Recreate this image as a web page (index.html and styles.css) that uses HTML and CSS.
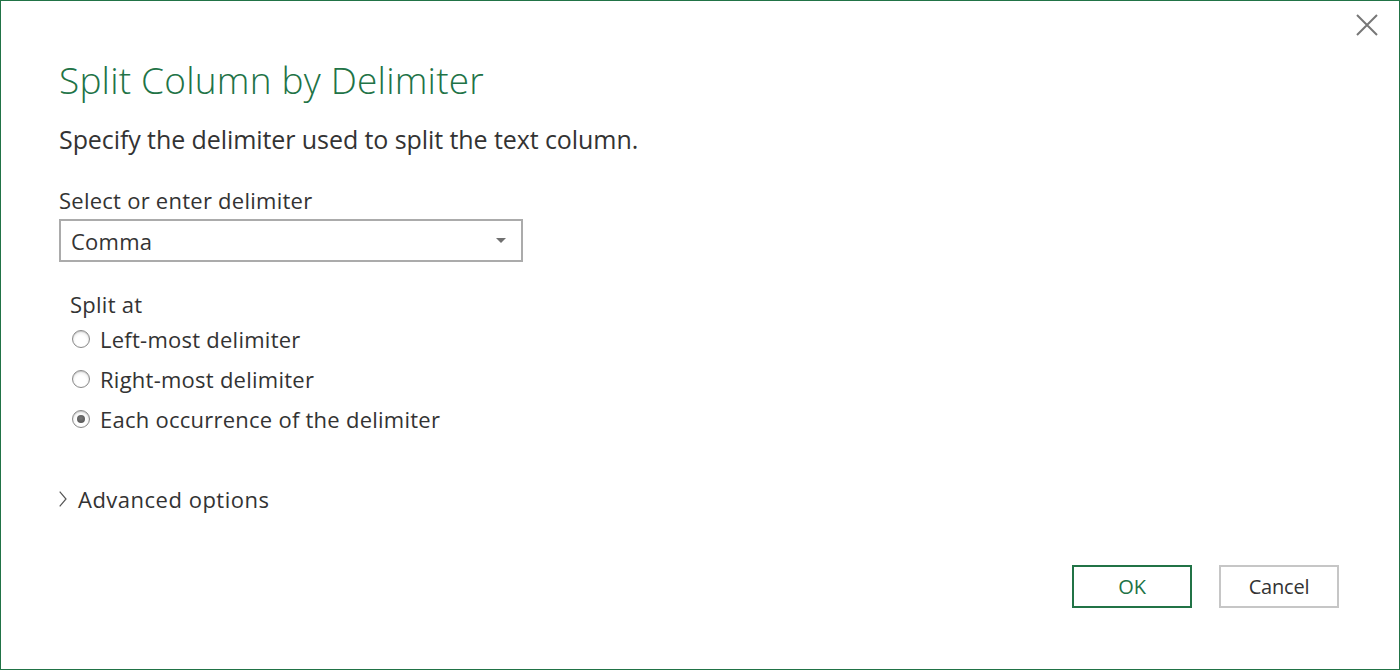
FILE: index.html
```html
<!DOCTYPE html>
<html lang="en">
<head>
<meta charset="utf-8">
<title>Split Column by Delimiter</title>
<link rel="stylesheet" href="styles.css">
</head>
<body>
<div class="dialog">
  <div class="topbar">
    <button class="close" aria-label="Close">
      <svg width="22" height="22" viewBox="0 0 22 22"><path d="M1 1L21 21M21 1L1 21" stroke="#777" stroke-width="2" fill="none"/></svg>
    </button>
  </div>
  <div class="content">
    <h1 class="title">Split Column by Delimiter</h1>
    <p class="subtitle">Specify the delimiter used to split the text column.</p>
    <div class="label">Select or enter delimiter</div>
    <div class="select">
      <span class="select-value">Comma</span>
      <span class="arrow"></span>
    </div>
    <div class="splitat">
      <div class="group-label">Split at</div>
      <div class="radio"><span class="dot"></span><span>Left-most delimiter</span></div>
      <div class="radio"><span class="dot"></span><span>Right-most delimiter</span></div>
      <div class="radio"><span class="dot checked"></span><span>Each occurrence of the delimiter</span></div>
    </div>
    <div class="advanced">
      <svg class="chev" width="8" height="16" viewBox="0 0 8 16"><path d="M0.7 0.7L7 8L0.7 15.3" stroke="#555" stroke-width="1.2" fill="none"/></svg>
      <span>Advanced options</span>
    </div>
  </div>
  <div class="footer">
    <button class="btn ok">OK</button>
    <button class="btn cancel">Cancel</button>
  </div>
</div>
</body>
</html>
```
FILE: styles.css
```css
html, body {
  margin: 0;
  padding: 0;
  background: #fff;
}
body {
  font-family: "Open Sans", "Noto Sans", sans-serif;
  color: #333;
}
.dialog {
  width: 1400px;
  height: 670px;
  box-sizing: border-box;
  border: 1px solid #217346;
  display: flex;
  flex-direction: column;
}
.topbar {
  display: flex;
  justify-content: flex-end;
  padding: 13px 21px 0 0;
  height: 22px;
}
.close {
  width: 22px;
  height: 22px;
  padding: 0;
  border: 0;
  background: none;
  display: block;
}
.close svg { display: block; }
.content {
  padding-left: 58px;
  flex: 1;
  display: flex;
  flex-direction: column;
  align-items: flex-start;
}
.title {
  margin: 20px 0 0 0;
  font-size: 37px;
  font-weight: 300;
  line-height: 48px;
  color: #217346;
  letter-spacing: 0.2px;
}
.subtitle {
  margin: 20px 0 0 0;
  font-size: 25px;
  line-height: 30px;
  letter-spacing: -0.08px;
}
.label {
  margin-top: 32px;
  font-size: 22px;
  line-height: 28px;
  letter-spacing: 0.25px;
}
.select {
  margin-top: 5px;
  box-sizing: border-box;
  width: 464px;
  height: 43px;
  border: 2px solid #ababab;
  display: flex;
  align-items: center;
  justify-content: space-between;
  padding: 0 15px 0 10px;
}
.select-value {
  font-size: 22px;
  letter-spacing: 0.25px;
}
.arrow {
  width: 0;
  height: 0;
  border-left: 5px solid transparent;
  border-right: 5px solid transparent;
  border-top: 5px solid #707070;
}
.splitat {
  margin-top: 28px;
  padding-left: 11px;
  display: flex;
  flex-direction: column;
}
.group-label {
  font-size: 22px;
  line-height: 29px;
  letter-spacing: 0.25px;
}
.radio {
  display: flex;
  align-items: center;
  gap: 10px;
  height: 40px;
  font-size: 22px;
  letter-spacing: 0.25px;
}
.dot {
  margin-left: 2px;
  width: 18px;
  height: 18px;
  box-sizing: border-box;
  border-radius: 50%;
  border: 1px solid #8a8a8a;
  background: radial-gradient(circle at 50% 60%, #ffffff 40%, #e2e2e2 100%);
  box-shadow: inset 0 1px 1px rgba(0,0,0,0.18);
  display: flex;
  align-items: center;
  justify-content: center;
}
.dot.checked::after {
  content: "";
  width: 8px;
  height: 8px;
  border-radius: 50%;
  background: radial-gradient(circle at 50% 40%, #777 0%, #4f4f4f 100%);
}
.advanced {
  margin-top: 45px;
  display: flex;
  align-items: center;
  gap: 11px;
  font-size: 22px;
  letter-spacing: 0.5px;
}
.chev { display: block; }
.footer {
  display: flex;
  justify-content: flex-end;
  gap: 27px;
  padding: 0 60px 61px 0;
}
.btn {
  width: 120px;
  height: 43px;
  box-sizing: border-box;
  background: #fff;
  font-family: "Open Sans", "Noto Sans", sans-serif;
  font-size: 20px;
  letter-spacing: -0.2px;
  padding: 0;
}
.btn.ok {
  border: 2px solid #217346;
  color: #217346;
}
.btn.cancel {
  border: 2px solid #c6c6c6;
  color: #333;
}
```
